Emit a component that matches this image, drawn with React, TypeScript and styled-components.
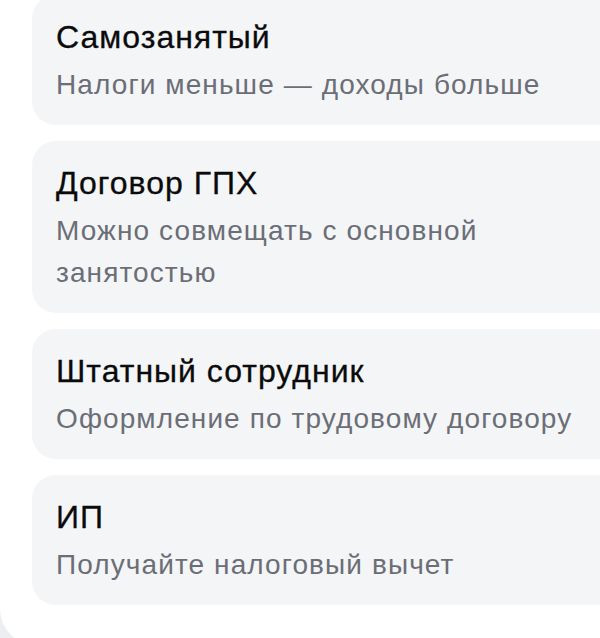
import React from "react";
import styled, { createGlobalStyle } from "styled-components";

const Global = createGlobalStyle`
  html, body {
    margin: 0;
    padding: 0;
    background: #eceef1;
    overflow: hidden;
  }
  #root {
    width: 600px;
    height: 638px;
    overflow: hidden;
  }
`;

const Sheet = styled.div`
  width: 680px;
  margin-top: -5px;
  background: #ffffff;
  border-bottom-left-radius: 36px;
  padding: 0 0 40px 32px;
  box-sizing: border-box;
`;

const List = styled.div`
  display: flex;
  flex-direction: column;
  gap: 16px;
`;

const Card = styled.div`
  display: flex;
  flex-direction: column;
  gap: 7px;
  width: 600px;
  box-sizing: border-box;
  background: #f4f5f7;
  border-radius: 24px;
  padding: 22px 24px 19px 24px;
`;

const Title = styled.div`
  font-family: "Liberation Sans", Arial, sans-serif;
  font-size: 32px;
  line-height: 40px;
  letter-spacing: 1px;
  color: #0b0b0c;
  -webkit-text-stroke: 0.3px #0b0b0c;
`;

const Subtitle = styled.div<{ $wrap?: boolean }>`
  font-family: "Liberation Sans", Arial, sans-serif;
  font-size: 28px;
  line-height: 42px;
  letter-spacing: 1.1px;
  color: #6b6e76;
  max-width: ${(p) => (p.$wrap ? "480px" : "560px")};
`;

const items = [
  { title: "Самозанятый", text: "Налоги меньше — доходы больше" },
  { title: "Договор ГПХ", text: "Можно совмещать с основной занятостью", wrap: true },
  { title: "Штатный сотрудник", text: "Оформление по трудовому договору" },
  { title: "ИП", text: "Получайте налоговый вычет" },
];

export default function App() {
  return (
    <>
      <Global />
      <Sheet>
        <List>
          {items.map((it) => (
            <Card key={it.title}>
              <Title>{it.title}</Title>
              <Subtitle $wrap={it.wrap}>{it.text}</Subtitle>
            </Card>
          ))}
        </List>
      </Sheet>
    </>
  );
}
